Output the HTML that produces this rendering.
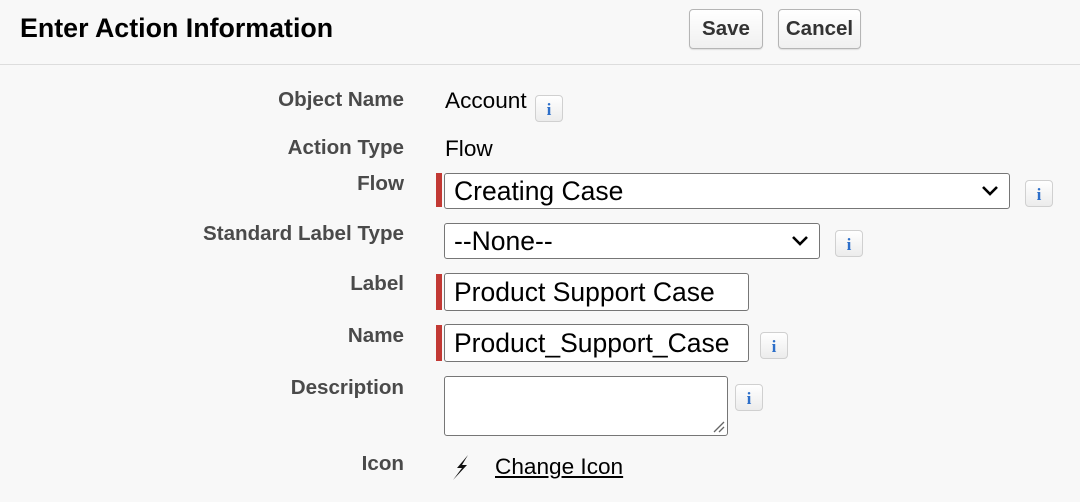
<!DOCTYPE html>
<html><head><style>
body{margin:0;width:1080px;height:502px;background:#f8f8f8;font-family:"Liberation Sans",Arial,sans-serif;position:relative;overflow:hidden}
.a{position:absolute}
.lbl{position:absolute;right:676px;font-weight:bold;color:#4a4a4a;font-size:20.6px;line-height:22px}
.val{position:absolute;left:445px;font-size:22.6px;color:#000;line-height:24px}
.btn{position:absolute;top:9px;height:40px;box-sizing:border-box;border:1px solid #b5b5b5;border-radius:4px;background:linear-gradient(#fff,#f0f0f0);font-weight:bold;font-size:20.5px;color:#333;text-align:center;line-height:38px;box-shadow:0 1px 1px rgba(0,0,0,.1)}
.info{position:absolute;width:28px;height:27px;box-sizing:border-box;border:1px solid #d0d0d0;border-radius:4px;background:linear-gradient(#fff,#ececec);color:#2d6fc9;font-family:"Liberation Serif",serif;font-weight:bold;font-size:17px;text-align:center;line-height:27px}
.bar{position:absolute;left:436px;width:6px;background:#c23934}
.box{position:absolute;left:444px;background:#fff;border:1px solid #767676;border-radius:3px;box-sizing:border-box;font-size:26.5px;padding-left:9px;color:#000}
.chev{position:absolute;right:10px;top:8px}
</style></head><body>
<div class="a" style="left:0;top:0;width:1080px;height:64px;border-bottom:1px solid #ddd;background:#f8f8f8"></div>
<div class="a" style="left:20px;top:13px;font-size:26.8px;font-weight:bold;color:#000">Enter Action Information</div>
<div class="btn" style="left:689px;width:74px">Save</div>
<div class="btn" style="left:778px;width:83px">Cancel</div>

<div class="lbl" style="top:89px">Object Name</div>
<div class="val" style="top:89px">Account</div>
<div class="info" style="left:535px;top:95px">i</div>

<div class="lbl" style="top:137px">Action Type</div>
<div class="val" style="top:137px">Flow</div>

<div class="lbl" style="top:173px">Flow</div>
<div class="bar" style="top:173px;height:34px"></div>
<div class="box" style="top:173px;width:566px;height:36px;line-height:34px">Creating Case<svg class="chev" width="18" height="18" viewBox="0 0 18 18"><path d="M2 5l7 7 7-7" fill="none" stroke="#000" stroke-width="2.6"/></svg></div>
<div class="info" style="left:1025px;top:180px">i</div>

<div class="lbl" style="top:223px">Standard Label Type</div>
<div class="box" style="top:223px;width:376px;height:36px;line-height:34px">--None--<svg class="chev" width="18" height="18" viewBox="0 0 18 18"><path d="M2 5l7 7 7-7" fill="none" stroke="#000" stroke-width="2.6"/></svg></div>
<div class="info" style="left:835px;top:230px">i</div>

<div class="lbl" style="top:273px">Label</div>
<div class="bar" style="top:274px;height:36px"></div>
<div class="box" style="top:273px;width:305px;height:38px;line-height:36px">Product Support Case</div>

<div class="lbl" style="top:325px">Name</div>
<div class="bar" style="top:325px;height:36px"></div>
<div class="box" style="top:324px;width:305px;height:38px;line-height:36px">Product_Support_Case</div>
<div class="info" style="left:760px;top:332px">i</div>

<div class="lbl" style="top:377px">Description</div>
<div class="box" style="top:376px;width:284px;height:60px"><svg class="a" style="right:2px;bottom:2px" width="14" height="14"><path d="M3 13L13 3M8 13L13 8" stroke="#666" stroke-width="1.3"/></svg></div>
<div class="info" style="left:735px;top:384px">i</div>

<div class="lbl" style="top:453px">Icon</div>
<svg class="a" style="left:449px;top:453px" width="24" height="28" viewBox="0 0 24 28"><path d="M19 2L8 15L13 15L4 27L18 12L13 12Z" fill="#111"/></svg>
<div class="a" style="left:495px;top:454px;font-size:22.6px;text-decoration:underline;color:#000">Change Icon</div>
</body></html>
